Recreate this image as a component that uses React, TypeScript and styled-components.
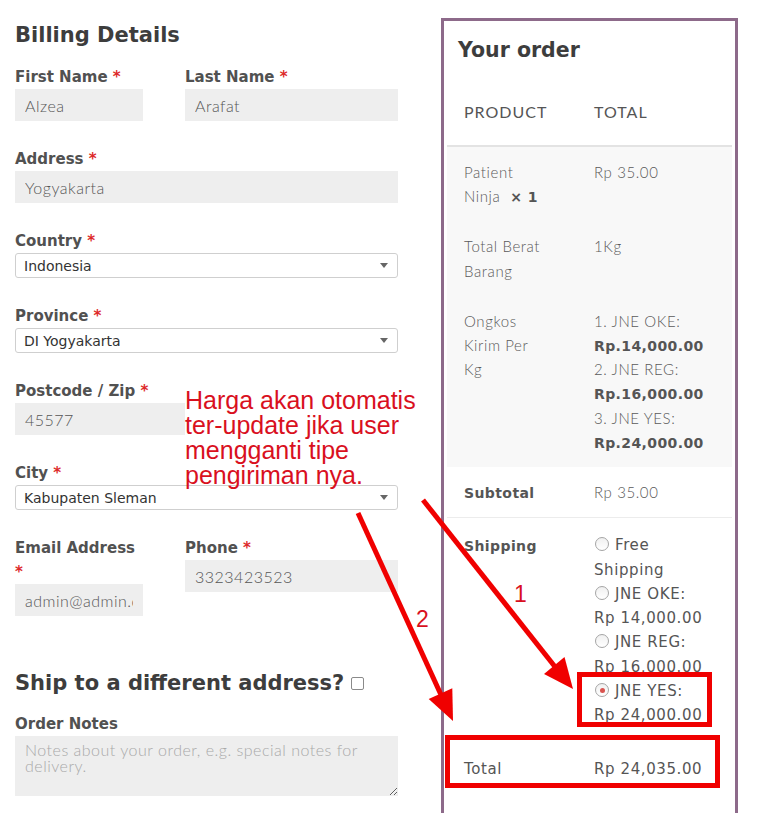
import React from "react";
import styled, { createGlobalStyle } from "styled-components";

//STYLES
const GlobalStyle = createGlobalStyle`
  html, body {
    margin: 0;
    padding: 0;
    background: #fff;
  }
  body {
    font-family: "DejaVu Sans", "Liberation Sans", sans-serif;
    color: #515151;
  }
  * {
    box-sizing: border-box;
  }
`;

const Page = styled.div`
  position: relative;
  display: flex;
  align-items: flex-start;
  width: 757px;
  height: 813px;
  padding-left: 15px;
  overflow: hidden;
`;

const Billing = styled.form`
  flex: 0 0 383px;
  padding-top: 20px;
`;

const Heading = styled.h3<{ $top?: number; $bottom?: number }>`
  margin: ${(p) => p.$top ?? 0}px 0 ${(p) => p.$bottom ?? 15}px;
  font-size: 21px;
  line-height: 30px;
  font-weight: bold;
  color: #3d3d3d;
`;

const Pair = styled.div`
  display: grid;
  grid-template-columns: 128px 1fr;
  column-gap: 42px;
  align-items: start;
`;

const Field = styled.div<{ $last?: boolean }>`
  margin-bottom: ${(p) => (p.$last ? 0 : 26)}px;
`;

const Label = styled.label`
  display: block;
  font-size: 15px;
  font-weight: bold;
  line-height: 24px;
  color: #515151;
`;

const Req = styled.abbr`
  color: #dd2a2a;
  text-decoration: none;
`;

const Input = styled.input`
  display: block;
  width: 100%;
  height: 32px;
  padding: 0 10px;
  border: none;
  outline: none;
  background: #eee;
  font-family: Lato, "Open Sans", sans-serif;
  font-weight: 300;
  font-size: 16px;
  letter-spacing: 0.5px;
  color: #555;
`;

const Select = styled.div`
  display: flex;
  align-items: center;
  justify-content: space-between;
  height: 25px;
  padding: 0 8px;
  border: 1px solid #cfcfcf;
  border-radius: 3px;
  background: #fff;
  font-size: 14px;
  color: #333;
`;

const Caret = styled.span`
  width: 0;
  height: 0;
  margin-right: 1px;
  border-left: 4px solid transparent;
  border-right: 4px solid transparent;
  border-top: 5px solid #666;
`;

const Checkbox = styled.span`
  display: inline-block;
  width: 13px;
  height: 13px;
  margin-left: 7px;
  vertical-align: 0;
  border: 1px solid #8a8a8a;
  border-radius: 2px;
  background: #fff;
`;

const Notes = styled.textarea`
  display: block;
  width: 100%;
  height: 60px;
  padding: 6px 10px;
  border: none;
  outline: none;
  background: #eee;
  font-family: Lato, "Open Sans", sans-serif;
  font-weight: 300;
  font-size: 16px;
  line-height: 16px;
  letter-spacing: 0.5px;
  color: #555;
  &::placeholder {
    color: #a9a9a9;
  }
`;

const Order = styled.aside`
  flex: 0 0 297px;
  min-height: 840px;
  margin: 18px 0 0 43px;
  padding: 0 3px;
  border: 3px solid #8d6a8a;
`;

const OrderTitle = styled.h3`
  margin: 14px 0 13px 11px;
  font-size: 20.5px;
  line-height: 30px;
  font-weight: bold;
  color: #3d3d3d;
`;

const Table = styled.table`
  width: 100%;
  border-collapse: collapse;
  table-layout: fixed;
`;

const HeadCell = styled.th`
  padding: 22px 17px 21px;
  text-align: left;
  font-family: Lato, "Open Sans", sans-serif;
  font-weight: 400;
  font-size: 16px;
  line-height: 24px;
  letter-spacing: 1px;
  color: #555;
  border-bottom: 2px solid #e3e3e3;
`;

const BodyRow = styled.tr`
  background: #f8f8f8;
`;

const FootRow = styled.tr<{ $line?: boolean }>`
  background: #fff;
  border-bottom: ${(p) => (p.$line ? "1px solid #ececec" : "none")};
`;

const Cell = styled.td<{ $name?: boolean; $top?: number }>`
  padding: ${(p) => p.$top ?? 13}px ${(p) => (p.$name ? 33 : 17)}px 13px 17px;
  vertical-align: top;
  font-family: Lato, "Open Sans", sans-serif;
  font-weight: 300;
  font-size: 15px;
  line-height: 24.2px;
  letter-spacing: 0.6px;
  color: #5a5a5a;
`;

const Strong = styled.strong`
  font-family: "DejaVu Sans", sans-serif;
  font-weight: bold;
  font-size: 14px;
  line-height: 1;
  letter-spacing: 0.4px;
  color: #555;
`;

const Plain = styled.span`
  font-family: "DejaVu Sans", sans-serif;
  font-weight: normal;
  font-size: 15px;
  line-height: 1;
  letter-spacing: 0.6px;
  color: #555;
`;

const Methods = styled.ul`
  margin: 0;
  padding: 0;
  list-style: none;
`;

const Method = styled.li`
  font-family: "DejaVu Sans", sans-serif;
  font-weight: normal;
  font-size: 15px;
  letter-spacing: 0.6px;
  line-height: 24.3px;
  color: #555;
`;

const Radio = styled.span<{ $checked?: boolean }>`
  position: relative;
  display: inline-block;
  width: 14px;
  height: 14px;
  margin: 0 6px 0 1px;
  vertical-align: -1px;
  border: 1px solid #a5a5a5;
  border-radius: 50%;
  background: linear-gradient(#f0f0f0, #fff);

  &::after {
    content: "";
    display: ${(p) => (p.$checked ? "block" : "none")};
    position: absolute;
    left: 3.5px;
    top: 3.5px;
    width: 5px;
    height: 5px;
    border-radius: 50%;
    background: #d9534f;
  }
`;

const Note = styled.div`
  position: absolute;
  left: 185px;
  top: 388px;
  width: 238px;
  height: 96px;
  background: #fff;
  font-family: "Liberation Sans", Arial, sans-serif;
  font-size: 25px;
  line-height: 25px;
  color: #d9101e;
`;

const Overlay = styled.svg`
  position: absolute;
  left: 0;
  top: 0;
  pointer-events: none;
`;

const RED = "#f00000";

export default function App() {
  return (
    <>
      <GlobalStyle />
      <Page>
        <Billing>
          <Heading>Billing Details</Heading>

          <Pair>
            <Field>
              <Label>
                First Name <Req>*</Req>
              </Label>
              <Input readOnly defaultValue="Alzea" />
            </Field>
            <Field>
              <Label>
                Last Name <Req>*</Req>
              </Label>
              <Input readOnly defaultValue="Arafat" />
            </Field>
          </Pair>

          <Field>
            <Label>
              Address <Req>*</Req>
            </Label>
            <Input readOnly defaultValue="Yogyakarta" />
          </Field>

          <Field>
            <Label>
              Country <Req>*</Req>
            </Label>
            <Select>
              Indonesia
              <Caret />
            </Select>
          </Field>

          <Field>
            <Label>
              Province <Req>*</Req>
            </Label>
            <Select>
              DI Yogyakarta
              <Caret />
            </Select>
          </Field>

          <Field>
            <Label>
              Postcode / Zip <Req>*</Req>
            </Label>
            <Input readOnly defaultValue="45577" />
          </Field>

          <Field>
            <Label>
              City <Req>*</Req>
            </Label>
            <Select>
              Kabupaten Sleman
              <Caret />
            </Select>
          </Field>

          <Pair>
            <Field>
              <Label>
                Email Address <Req>*</Req>
              </Label>
              <Input readOnly defaultValue="admin@admin.com" />
            </Field>
            <Field>
              <Label>
                Phone <Req>*</Req>
              </Label>
              <Input readOnly defaultValue="3323423523" />
            </Field>
          </Pair>

          <Heading $top={26} $bottom={14}>
            Ship to a different address?
            <Checkbox />
          </Heading>

          <Field $last>
            <Label>Order Notes</Label>
            <Notes placeholder="Notes about your order, e.g. special notes for delivery." />
          </Field>
        </Billing>

        <Order>
          <OrderTitle>Your order</OrderTitle>
          <Table>
            <colgroup>
              <col style={{ width: 130 }} />
              <col />
            </colgroup>
            <thead>
              <tr>
                <HeadCell>PRODUCT</HeadCell>
                <HeadCell>TOTAL</HeadCell>
              </tr>
            </thead>
            <tbody>
              <BodyRow>
                <Cell $name>
                  Patient Ninja{"\u00a0"}
                  <Strong>{"\u00a0×\u00a01"}</Strong>
                </Cell>
                <Cell>Rp 35.00</Cell>
              </BodyRow>
              <BodyRow>
                <Cell $name>Total Berat Barang</Cell>
                <Cell>1Kg</Cell>
              </BodyRow>
              <BodyRow>
                <Cell $name>Ongkos Kirim Per Kg</Cell>
                <Cell>
                  1. JNE OKE:
                  <br />
                  <Strong>Rp.14,000.00</Strong>
                  <br />
                  2. JNE REG:
                  <br />
                  <Strong>Rp.16,000.00</Strong>
                  <br />
                  3. JNE YES:
                  <br />
                  <Strong>Rp.24,000.00</Strong>
                </Cell>
              </BodyRow>
            </tbody>
            <tfoot>
              <FootRow $line>
                <Cell $name>
                  <Strong>Subtotal</Strong>
                </Cell>
                <Cell>Rp 35.00</Cell>
              </FootRow>
              <FootRow>
                <Cell $name $top={15}>
                  <Strong>Shipping</Strong>
                </Cell>
                <Cell $top={15}>
                  <Methods>
                    <Method>
                      <Radio />
                      Free Shipping
                    </Method>
                    <Method>
                      <Radio />
                      JNE OKE: Rp{"\u00a0"}14,000.00
                    </Method>
                    <Method>
                      <Radio />
                      JNE REG: Rp{"\u00a0"}16,000.00
                    </Method>
                    <Method>
                      <Radio $checked />
                      JNE YES: Rp{"\u00a0"}24,000.00
                    </Method>
                  </Methods>
                </Cell>
              </FootRow>
              <FootRow>
                <Cell $name $top={15}>
                  <Plain>Total</Plain>
                </Cell>
                <Cell $top={15}>
                  <Plain>Rp 24,035.00</Plain>
                </Cell>
              </FootRow>
            </tfoot>
          </Table>
        </Order>

        {/* annotation drawn over the screenshot */}
        <Note>
          Harga akan otomatis
          <br />
          ter-update jika user
          <br />
          mengganti tipe
          <br />
          pengiriman nya.
        </Note>

        <Overlay width="757" height="813" viewBox="0 0 757 813">
          <line x1="423" y1="500" x2="556" y2="668" stroke={RED} strokeWidth="5" />
          <polygon points="573,689 544,674 564.5,657" fill={RED} />
          <line x1="358" y1="513" x2="442" y2="697" stroke={RED} strokeWidth="5" />
          <polygon points="453,721 428.7,699 452.3,688.3" fill={RED} />
          <rect x="579.5" y="674.5" width="130" height="50" fill="none" stroke={RED} strokeWidth="5" />
          <rect x="447.5" y="737.5" width="270" height="48" fill="none" stroke={RED} strokeWidth="5" />
          <text x="514" y="602" fill="#d9101e" fontFamily="Liberation Sans, Arial, sans-serif" fontSize="23">
            1
          </text>
          <text x="416" y="627" fill="#d9101e" fontFamily="Liberation Sans, Arial, sans-serif" fontSize="23">
            2
          </text>
        </Overlay>
      </Page>
    </>
  );
}
